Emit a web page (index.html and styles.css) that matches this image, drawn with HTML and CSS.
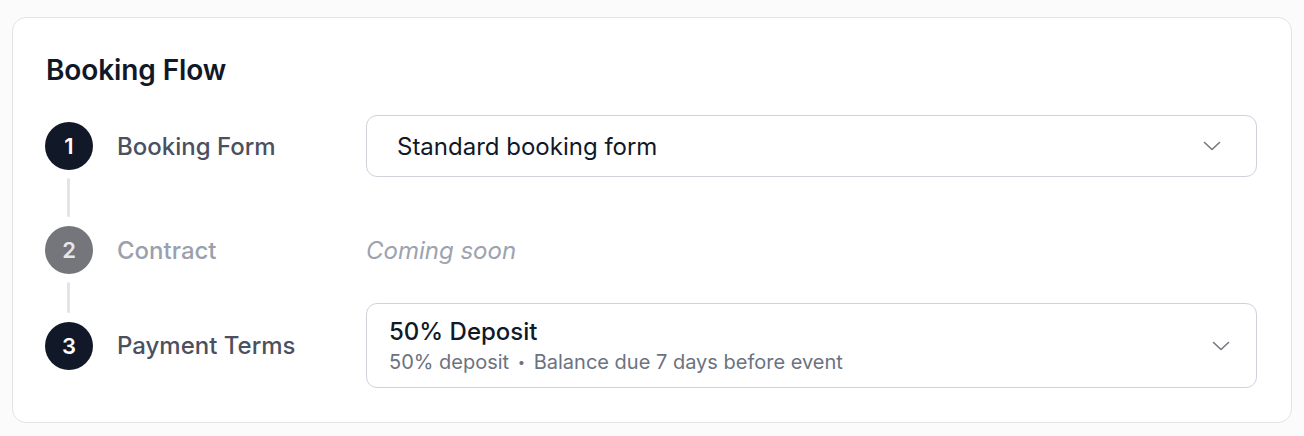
FILE: index.html
```html
<!DOCTYPE html>
<html lang="en">
<head>
<meta charset="utf-8">
<title>Booking Flow</title>
<link rel="stylesheet" href="styles.css">
</head>
<body>
<div class="page">
  <section class="card">
    <h2 class="card-title">Booking Flow</h2>
    <ol class="steps">
      <li class="step">
        <div class="marker marker--line-long"><span class="circle">1</span></div>
        <div class="label">Booking Form</div>
        <div class="control">
          <button class="select select--single" type="button">
            <span class="select-text">Standard booking form</span>
            <svg class="chevron" width="18" height="10" viewBox="0 0 18 10" aria-hidden="true"><path d="M1.5 1.5L9 8.5L16.5 1.5" fill="none" stroke="currentColor" stroke-width="1.6" stroke-linecap="round" stroke-linejoin="round"/></svg>
          </button>
        </div>
      </li>
      <li class="step step--disabled">
        <div class="marker marker--line-short"><span class="circle circle--muted">2</span></div>
        <div class="label label--muted">Contract</div>
        <div class="control"><span class="soon">Coming soon</span></div>
      </li>
      <li class="step step--last">
        <div class="marker"><span class="circle">3</span></div>
        <div class="label">Payment Terms</div>
        <div class="control">
          <button class="select select--double" type="button">
            <span class="select-body">
              <span class="select-title">50% Deposit</span>
              <span class="select-sub">50% deposit <span class="dot">•</span> Balance due 7 days before event</span>
            </span>
            <svg class="chevron" width="18" height="10" viewBox="0 0 18 10" aria-hidden="true"><path d="M1.5 1.5L9 8.5L16.5 1.5" fill="none" stroke="currentColor" stroke-width="1.6" stroke-linecap="round" stroke-linejoin="round"/></svg>
          </button>
        </div>
      </li>
    </ol>
  </section>
</div>
</body>
</html>
```

FILE: styles.css
```css
* { box-sizing: border-box; }
html, body { margin: 0; padding: 0; background: #fbfbfc; }
body { font-family: Inter, "Noto Sans", "Liberation Sans", sans-serif; color: #111827; }
.page { padding: 17px 12px; }
.card {
  width: 1280px;
  height: 406px;
  background: #ffffff;
  border: 1px solid #e3e4e8;
  border-radius: 14px;
  padding: 34px 34px 0 32px;
}
.card-title {
  margin: 0 0 27px 1px;
  font-size: 28px;
  line-height: 36px;
  font-weight: 600;
  color: #111827;
  letter-spacing: -0.1px;
}
.steps { list-style: none; margin: 0; padding: 0; display: flex; flex-direction: column; }
.step { display: flex; align-items: center; }
.step--disabled { margin-top: 49px; }
.step--last { margin-top: 29px; }
.marker { position: relative; width: 48px; height: 48px; flex: none; }
.circle {
  display: flex; align-items: center; justify-content: center;
  width: 48px; height: 48px; border-radius: 50%;
  background: #111827; color: #ffffff;
  font-size: 22px; font-weight: 600;
}
.circle--muted { background: #74767c; color: #e5e7eb; }
.marker--line-long::after,
.marker--line-short::after {
  content: "";
  position: absolute;
  left: 22px;
  top: 56px;
  width: 3px;
  background: #e2e4e8;
  border-radius: 2px;
}
.marker--line-long::after { height: 39px; }
.marker--line-short::after { height: 31px; }
.label {
  width: 249px;
  margin-left: 24px;
  flex: none;
  font-size: 24px;
  font-weight: 500;
  color: #4b5060;
}
.label--muted { color: #9aa0ae; }
.control { flex: 1; min-width: 0; }
.select {
  width: 100%;
  display: flex; align-items: center; justify-content: space-between;
  background: #ffffff;
  border: 1.5px solid #d1d1dc;
  border-radius: 11px;
  font-family: inherit;
  text-align: left;
  color: #111827;
  cursor: pointer;
}
.select--single { height: 62px; padding: 0 35px 0 30px; }
.select--double { height: 85px; padding: 0 26px 0 22px; }
.select-text { font-size: 24px; font-weight: 400; color: #111827; }
.select-body { display: flex; flex-direction: column; gap: 2px; }
.select-title { font-size: 24px; font-weight: 500; color: #111827; line-height: 30px; }
.select-sub { font-size: 20px; color: #6b7280; line-height: 26px; }
.dot { font-size: 13px; vertical-align: 2px; padding: 0 3px; }
.chevron { color: #75777e; flex: none; width: 18px; height: 10px; }
.soon { font-size: 24px; font-style: italic; color: #9ca3af; }
```
